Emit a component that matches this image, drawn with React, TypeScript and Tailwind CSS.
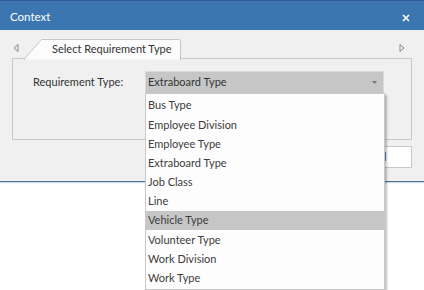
import React from "react";

const items = [
  "Bus Type",
  "Employee Division",
  "Employee Type",
  "Extraboard Type",
  "Job Class",
  "Line",
  "Vehicle Type",
  "Volunteer Type",
  "Work Division",
  "Work Type",
];

export default function App() {
  return (
    <div
      className="relative w-[424px] h-[290px] bg-white overflow-hidden text-[11px] text-[#3c3c3c] whitespace-nowrap"
      style={{ fontFamily: 'Lato, "Noto Sans", sans-serif' }}
    >
      {/* Dialog */}
      <div className="h-[182px] flex flex-col bg-[#f0f0f0] border-b border-[#4f6f94] shadow-[0_1px_1px_rgba(120,150,190,0.35)]">
        <div className="h-[30px] shrink-0 flex items-center justify-between pl-[10px] pr-[14px] pt-[3px] bg-[#3b76b1] border-t border-[#2f5f92] text-white">
          <span className="text-[11.5px] leading-none">Context</span>
          <svg width="8" height="8" viewBox="0 0 8 8" className="mt-[1px]">
            <path d="M1 1 L7 7 M7 1 L1 7" stroke="white" strokeWidth="1.6" />
          </svg>
        </div>
        <div className="flex-1 flex flex-col px-[12px] pb-[13px]">
          {/* tab strip */}
          <div className="h-[28px] shrink-0 flex items-end relative">
            <svg width="6" height="8" viewBox="0 0 6 8" className="absolute left-[1px] top-[14px]">
              <path d="M5 0.5 L1 4 L5 7.5 Z" fill="none" stroke="#8a8a8a" strokeWidth="1" />
            </svg>
            <svg width="6" height="8" viewBox="0 0 6 8" className="absolute right-[7px] top-[14px]">
              <path d="M1 0.5 L5 4 L1 7.5 Z" fill="none" stroke="#8a8a8a" strokeWidth="1" />
            </svg>
            <div className="relative ml-[12px] w-[157px] h-[20px] mb-[-1px] z-10">
              <svg width="157" height="21" viewBox="0 0 157 21" className="absolute inset-0">
                <path d="M0 20.5 L17.5 0.5 L154.5 0.5 Q156.5 0.5 156.5 2.5 L156.5 21 L0 21 Z" fill="#fcfcfc" stroke="#c6c6c6" strokeWidth="1" />
                <path d="M1 21 L156 21" stroke="#fcfcfc" strokeWidth="1.5" />
              </svg>
              <span className="absolute left-[28px] top-[2px] leading-[16px] text-[#333]">Select Requirement Type</span>
            </div>
          </div>
          {/* panel */}
          <div className="h-[82px] shrink-0 border border-[#c8c8c8] bg-[#f0f0f0] flex items-start pt-[12px] pl-[20px] pr-[27px]">
            <span className="w-[112px] pt-[3px] text-[#333]">Requirement Type:</span>
            <div className="flex-1 h-[23px] bg-[#c6c6c6] border border-[#dadada] flex items-center justify-between pl-[2px] pr-[6px] text-[#333]">
              <span>Extraboard Type</span>
              <svg width="5" height="3" viewBox="0 0 5 3">
                <path d="M0 0 L5 0 L2.5 3 Z" fill="#777" />
              </svg>
            </div>
          </div>
          <div className="flex-1 flex items-end justify-end gap-[8px]">
            <div className="w-[84px] h-[22px] border border-[#c8c8c8] bg-white flex items-center justify-center text-[#333]">OK</div>
            <div className="w-[84px] h-[22px] border border-[#c8c8c8] bg-white flex items-center justify-center text-[#333]">Cancel</div>
          </div>
        </div>
      </div>

      {/* Dropdown list */}
      <div className="absolute left-[145px] top-[93px] w-[240px] bg-[#fdfdfd] border border-[#c8c8c8] shadow-[2px_2px_2px_rgba(0,0,0,0.25)] pt-[2px] pb-[1px]">
        {items.map((it) => (
          <div
            key={it}
            className={
              "h-[19.2px] flex items-center pl-[2px] " +
              (it === "Vehicle Type" ? "bg-[#c6c6c6]" : "")
            }
          >
            {it}
          </div>
        ))}
      </div>
    </div>
  );
}
